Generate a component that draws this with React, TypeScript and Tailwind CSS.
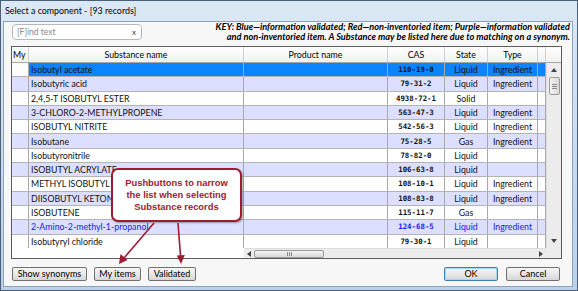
import React from "react";

type Row = { name: string; cas: string; state: string; type: string; blue?: boolean };

const rows: Row[] = [
  { name: "Isobutyl acetate", cas: "110-19-0", state: "Liquid", type: "Ingredient" },
  { name: "Isobutyric acid", cas: "79-31-2", state: "Liquid", type: "Ingredient" },
  { name: "2,4,5-T ISOBUTYL ESTER", cas: "4938-72-1", state: "Solid", type: "" },
  { name: "3-CHLORO-2-METHYLPROPENE", cas: "563-47-3", state: "Liquid", type: "Ingredient" },
  { name: "ISOBUTYL NITRITE", cas: "542-56-3", state: "Liquid", type: "Ingredient" },
  { name: "Isobutane", cas: "75-28-5", state: "Gas", type: "Ingredient" },
  { name: "Isobutyronitrile", cas: "78-82-0", state: "Liquid", type: "" },
  { name: "ISOBUTYL ACRYLATE", cas: "106-63-8", state: "Liquid", type: "" },
  { name: "METHYL ISOBUTYL KETONE", cas: "108-10-1", state: "Liquid", type: "Ingredient" },
  { name: "DIISOBUTYL KETONE", cas: "108-83-8", state: "Liquid", type: "Ingredient" },
  { name: "ISOBUTENE", cas: "115-11-7", state: "Gas", type: "" },
  { name: "2-Amino-2-methyl-1-propanol", cas: "124-68-5", state: "Liquid", type: "Ingredient", blue: true },
  { name: "Isobutyryl chloride", cas: "79-30-1", state: "Liquid", type: "" },
];

function Btn({ label, w, def }: { label: string; w: string; def?: boolean }) {
  return (
    <div
      className={`${w} h-[14px] flex items-center justify-center rounded-[2px] border text-[9px] text-black bg-gradient-to-b from-[#f6f6f6] via-[#e8e8e8] to-[#d6d6d6] ${
        def ? "border-[#3c7fb1] shadow-[inset_0_0_0_1px_#a6d8f2]" : "border-[#707070]"
      }`}
    >
      {label}
    </div>
  );
}

export default function App() {
  return (
    <div className="relative w-[578px] h-[291px] overflow-hidden border border-[#4b5f78] bg-gradient-to-b from-[#dbe8f5] to-[#b9d1ea] flex flex-col font-['Lato',sans-serif]">
      {/* Title bar */}
      <div className="h-[20px] shrink-0 flex items-center pl-[4px] text-[8.9px] text-black">
        Select a component - [93 records]
      </div>

      {/* Client area */}
      <div className="flex-1 ml-[2px] mr-[4px] mb-[3px] border border-[#8ea3ba] bg-[#f7f7f7] flex flex-col">
        {/* top row */}
        <div className="h-[24px] shrink-0 flex justify-between items-start">
          <div className="ml-[8px] mt-[2px] w-[130px] h-[16px] rounded-[4px] border border-[#b5b8bf] bg-white flex items-center justify-between pl-[4px] pr-[5px]">
            <span className="text-[8.5px] text-[#8a8a8a]">[F]ind text</span>
            <span className="text-[8px] text-[#444]">x</span>
          </div>
          <div className="mr-[2px] mt-0 text-right text-[9.2px] leading-[10px] font-bold italic text-black whitespace-nowrap">
            <div>KEY: Blue—information validated; Red—non-inventoried item; Purple—information validated</div>
            <div>and non-inventoried item. A Substance may be listed here due to matching on a synonym.</div>
          </div>
        </div>

        {/* table */}
        <div className="ml-[7px] w-[551px] h-[213px] border border-[#5c5c5c] bg-white flex flex-col text-[8.8px] text-black">
          {/* header */}
          <div className="h-[16px] shrink-0 flex border-b border-[#a8a8a8] bg-gradient-to-b from-white to-[#f1f1f1] text-[8.8px]">
            <div className="w-[17px] shrink-0 border-r border-[#d0d0d0] flex items-center pl-[1px]">My</div>
            <div className="w-[215px] shrink-0 border-r border-[#d0d0d0] flex items-center justify-center">Substance name</div>
            <div className="w-[144px] shrink-0 border-r border-[#d0d0d0] flex items-center justify-center">Product name</div>
            <div className="w-[57px] shrink-0 border-r border-[#d0d0d0] flex items-center justify-center">CAS</div>
            <div className="w-[43px] shrink-0 border-r border-[#d0d0d0] flex items-center justify-center">State</div>
            <div className="w-[50px] shrink-0 border-r border-[#d0d0d0] flex items-center justify-center">Type</div>
            <div className="w-[8px] shrink-0 border-r border-[#d0d0d0]"></div>
            <div className="flex-1"></div>
          </div>

          {/* body */}
          <div className="flex flex-1">
            <div className="w-[534px] flex flex-col">
              <div className="h-[185px] overflow-hidden flex flex-col">
                {rows.map((r, i) => {
                  const sel = i === 0;
                  const alt = i % 2 === 1;
                  const bg = sel ? "bg-[#0a84ff]" : alt ? "bg-[#dcdfff]" : "bg-white";
                  const myBg = sel ? "bg-white" : alt ? "bg-[#dcdfff]" : "bg-white";
                  const color = r.blue ? "text-[#1818f0]" : "text-[#111]";
                  return (
                    <div key={i} className={`h-[14.3px] shrink-0 flex border-b border-[#b4b4b4] ${color}`}>
                      <div className={`w-[17px] shrink-0 border-r border-[#a8a8a8] ${myBg}`}></div>
                      <div className={`w-[215px] shrink-0 border-r border-[#a8a8a8] flex items-center pl-[2px] whitespace-nowrap overflow-hidden ${bg}`}>
                        {r.name}
                      </div>
                      <div className={`w-[144px] shrink-0 border-r border-[#a8a8a8] ${bg}`}></div>
                      <div className={`w-[57px] shrink-0 border-r border-[#a8a8a8] flex items-center justify-center font-['DejaVu_Sans_Mono',monospace] text-[7.4px] font-bold ${bg}`}>
                        {r.cas}
                      </div>
                      <div className={`w-[43px] shrink-0 border-r border-[#a8a8a8] flex items-center justify-center ${bg}`}>
                        {r.state}
                      </div>
                      <div className={`w-[50px] shrink-0 border-r border-[#a8a8a8] flex items-center justify-center ${bg}`}>
                        {r.type}
                      </div>
                      <div className={`w-[8px] shrink-0 border-r border-[#a8a8a8] ${bg}`}></div>
                    </div>
                  );
                })}
              </div>
              {/* horizontal scroll strip */}
              <div className="h-[10px] flex">
                <div className="w-[232px] bg-white"></div>
                <div className="flex-1 bg-[#ececec] border-t border-[#dcdcdc] relative flex items-center">
                  <div className="w-[10px] flex items-center justify-center">
                    <svg width="4" height="6" viewBox="0 0 4 6"><path d="M4 0 L0 3 L4 6 Z" fill="#444" /></svg>
                  </div>
                  <div className="w-[70px] h-[8px] rounded-[2px] border border-[#9a9a9a] bg-gradient-to-b from-[#f4f4f4] to-[#d9d9d9] flex items-center justify-center">
                    <div className="flex gap-[1px]">
                      <div className="w-[1px] h-[4px] bg-[#888]"></div>
                      <div className="w-[1px] h-[4px] bg-[#888]"></div>
                      <div className="w-[1px] h-[4px] bg-[#888]"></div>
                    </div>
                  </div>
                  <div className="flex-1"></div>
                  <div className="w-[10px] flex items-center justify-center">
                    <svg width="4" height="6" viewBox="0 0 4 6"><path d="M0 0 L4 3 L0 6 Z" fill="#444" /></svg>
                  </div>
                </div>
              </div>
            </div>
            {/* vertical scrollbar */}
            <div className="flex-1 flex flex-col">
              <div className="h-[185px] bg-[#ececec] border-l border-[#dcdcdc] flex flex-col items-center">
                <div className="h-[14px] w-full flex items-center justify-center">
                  <svg width="6" height="4" viewBox="0 0 6 4"><path d="M0 4 L3 0 L6 4 Z" fill="#444" /></svg>
                </div>
                <div className="w-[11px] h-[18px] rounded-[2px] border border-[#9a9a9a] bg-gradient-to-r from-[#f4f4f4] to-[#d9d9d9] flex items-center justify-center">
                  <div className="flex flex-col gap-[1px]">
                    <div className="w-[5px] h-[1px] bg-[#888]"></div>
                    <div className="w-[5px] h-[1px] bg-[#888]"></div>
                    <div className="w-[5px] h-[1px] bg-[#888]"></div>
                  </div>
                </div>
                <div className="flex-1"></div>
                <div className="h-[14px] w-full flex items-center justify-center">
                  <svg width="6" height="4" viewBox="0 0 6 4"><path d="M0 0 L6 0 L3 4 Z" fill="#444" /></svg>
                </div>
              </div>
              <div className="flex-1 bg-[#ececec]"></div>
            </div>
          </div>
        </div>

        {/* buttons */}
        <div className="mt-[8px] flex items-center pl-[8px] pr-[12px]">
          <Btn label="Show synonyms" w="w-[75px]" />
          <div className="w-[7px]"></div>
          <Btn label="My items" w="w-[47px]" />
          <div className="w-[7px]"></div>
          <Btn label="Validated" w="w-[48px]" />
          <div className="flex-1"></div>
          <Btn label="OK" w="w-[54px]" def />
          <div className="w-[8px]"></div>
          <Btn label="Cancel" w="w-[54px]" />
        </div>
      </div>

      {/* Callout */}
      <div className="absolute left-[110px] top-[167px] w-[131px] h-[54px] rounded-[7px] border-2 border-[#9e1b32] bg-white shadow-[1px_1px_2px_rgba(0,0,0,0.35)] flex flex-col items-center justify-center text-[9.4px] leading-[12px] font-bold text-[#9e1b32] font-['Liberation_Sans',Arial,sans-serif] whitespace-nowrap">
        <div>Pushbuttons to narrow</div>
        <div>the list when selecting</div>
        <div>Substance records</div>
      </div>
      <svg className="absolute left-0 top-0 pointer-events-none" width="578" height="291" viewBox="0 0 578 291">
        <line x1="153" y1="222" x2="123" y2="257" stroke="#9e1b32" strokeWidth="1.6" />
        <path d="M118 263 L119.5 253 L126.5 259 Z" fill="#9e1b32" />
        <line x1="177" y1="222" x2="179.6" y2="256" stroke="#9e1b32" strokeWidth="1.6" />
        <path d="M180 263 L175.8 254.5 L183.8 254 Z" fill="#9e1b32" />
      </svg>
    </div>
  );
}
